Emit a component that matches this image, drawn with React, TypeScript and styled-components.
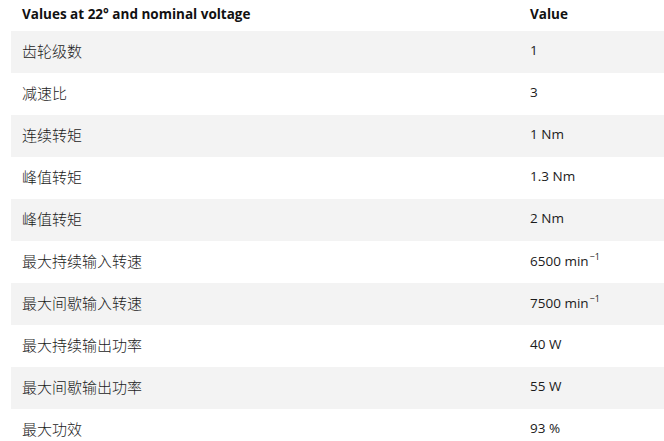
import styled, { createGlobalStyle } from "styled-components";

const GlobalStyle = createGlobalStyle`
  html, body {
    margin: 0;
    padding: 0;
    background: #ffffff;
  }
  body {
    font-family: "Open Sans", "Noto Sans CJK SC", sans-serif;
    color: #1b1b1b;
  }
`;

type Row = {
  label: string;
  value: string;
  sup?: string;
};

const rows: Row[] = [
  { label: "齿轮级数", value: "1" },
  { label: "减速比", value: "3" },
  { label: "连续转矩", value: "1 Nm" },
  { label: "峰值转矩", value: "1.3 Nm" },
  { label: "峰值转矩", value: "2 Nm" },
  { label: "最大持续输入转速", value: "6500 min", sup: "−1" },
  { label: "最大间歇输入转速", value: "7500 min", sup: "−1" },
  { label: "最大持续输出功率", value: "40 W" },
  { label: "最大间歇输出功率", value: "55 W" },
  { label: "最大功效", value: "93 %" },
];

function App() {
  return (
    <>
      <GlobalStyle />
      <Page>
        <Table>
          <HeadRow>
            <HeadCell>Values at 22° and nominal voltage</HeadCell>
            <HeadCell>Value</HeadCell>
          </HeadRow>
          {rows.map((row, i) => (
            <BodyRow key={i} $striped={i % 2 === 0}>
              <LabelCell>{row.label}</LabelCell>
              <Cell>
                {row.value}
                {row.sup && <Sup>{row.sup}</Sup>}
              </Cell>
            </BodyRow>
          ))}
        </Table>
      </Page>
    </>
  );
}

export default App;

const Page = styled.div`
  padding-left: 11px;
  width: 664px;
  box-sizing: border-box;
`;

const Table = styled.div`
  display: flex;
  flex-direction: column;
`;

const HeadRow = styled.div`
  display: grid;
  grid-template-columns: 508px 1fr;
  height: 31px;
  align-items: center;
`;

const HeadCell = styled.div`
  padding-left: 11px;
  font-size: 13.5px;
  font-weight: 700;
  color: #111;
  padding-bottom: 4px;
`;

const BodyRow = styled.div<{ $striped: boolean }>`
  display: grid;
  grid-template-columns: 508px 1fr;
  height: 42px;
  align-items: center;
  background: ${(props) => (props.$striped ? "#f3f3f3" : "#ffffff")};
`;

const Cell = styled.div`
  padding-left: 11px;
  font-size: 13.5px;
  padding-bottom: 4px;
  white-space: nowrap;
`;

const LabelCell = styled(Cell)`
  font-size: 15px;
  font-weight: 300;
  letter-spacing: 0;
`;

const Sup = styled.sup`
  font-size: 9px;
  margin-left: 1px;
`;
